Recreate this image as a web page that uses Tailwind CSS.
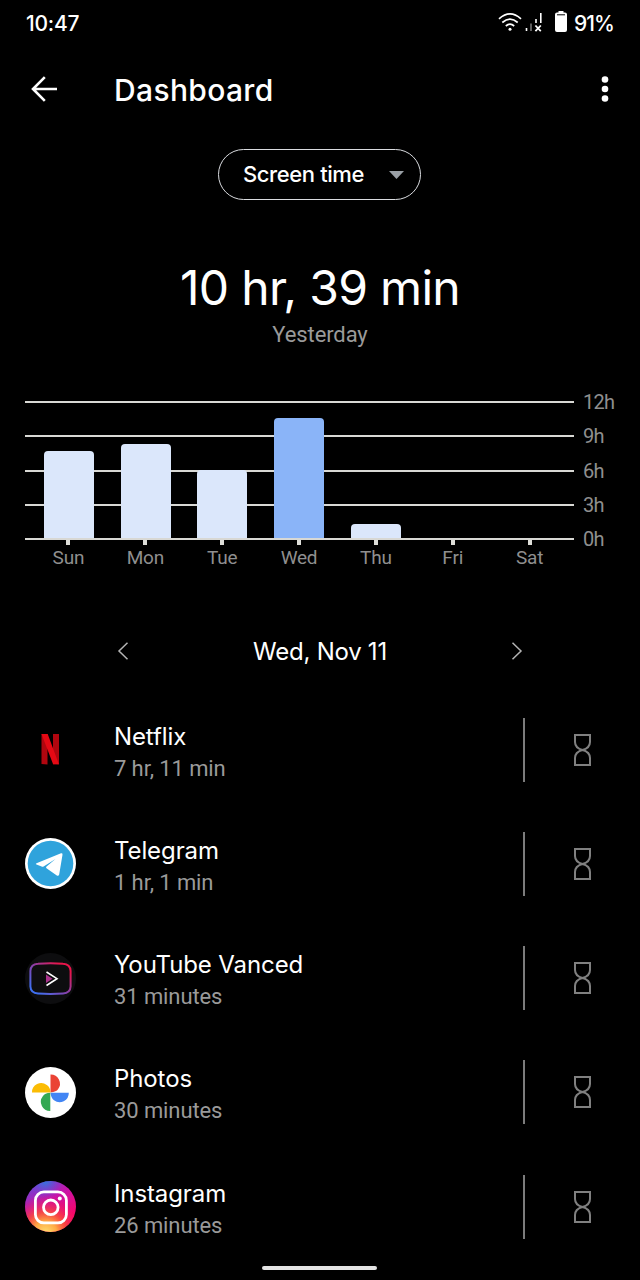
<!doctype html>
<html lang="en">
  <head>
    <meta charset="UTF-8" />
    <title>Dashboard</title>
    <meta name="viewport" content="width=device-width, initial-scale=1.0" />
    <script src="https://cdn.jsdelivr.net/npm/@tailwindcss/browser@4"></script>
  </head>

  <body class="bg-black text-white font-['Inter',sans-serif]">
    <div class="relative w-[640px] h-[1280px] overflow-hidden flex flex-col">
      <!-- Status bar -->
      <div class="h-[46px] shrink-0 flex items-center justify-between pl-[26px] pr-[26px]">
        <span class="pt-px text-[21px] font-medium tracking-[-0.2px]">10:47</span>
        <div class="flex items-center">
          <svg class="w-6 h-5 mr-[3px] -mt-[3px]" viewBox="0 0 24 20" fill="none" stroke="#fff" stroke-width="1.7">
            <path d="M1 6.8Q12-3 23 6.8M4.3 10.5Q12 3.8 19.7 10.5M7.8 14Q12 10.3 16.2 14" />
            <circle cx="12" cy="17.2" r="1.5" fill="#fff" stroke="none" />
          </svg>
          <svg class="w-[18px] h-5 mr-[12px] -mt-[2px]" viewBox="0 0 18 20" fill="none" stroke="#fff">
            <path d="M1.5 16v3" stroke-width="1.6" />
            <path d="M6 11.5V19" stroke="#777" stroke-width="1.6" />
            <path d="M11 7v4M15.8 1v10" stroke-width="1.6" />
            <path d="M10.4 13.5l5.4 5.6M15.8 13.5l-5.4 5.6" stroke-width="1.8" />
          </svg>
          <svg class="w-3 h-[21px] mr-[7px] -mt-[3px]" viewBox="0 0 12 21">
            <path fill="#fff" d="M3.5 0h5v1.500H10a2 2 0 0 1 2 2v15.500a2 2 0 0 1-2 2H2a2 2 0 0 1-2-2V3.500a2 2 0 0 1 2-2h1.500z" />
            <path d="M2 3.800h8" stroke="#000" stroke-width="1" />
          </svg>
          <span class="pt-px text-[21px] font-medium tracking-[-0.9px]">91%</span>
        </div>
      </div>

      <!-- App bar -->
      <header class="h-[86px] shrink-0 flex items-center pl-[31px] pr-[31px]">
        <svg class="w-[26px] h-[26px]" viewBox="0 0 26 26" fill="none" stroke="#fff" stroke-width="2.6">
          <path d="M26 13H2M13.800 1.200L2 13l11.800 11.800" />
        </svg>
        <h1 class="ml-[57px] mt-[2px] text-[30px] leading-9 font-medium tracking-[0.35px]">Dashboard</h1>
        <svg class="ml-auto w-2 h-[26px]" viewBox="0 0 8 26" fill="#fff">
          <circle cx="4" cy="3.500" r="3.300" />
          <circle cx="4" cy="13" r="3.300" />
          <circle cx="4" cy="22.500" r="3.300" />
        </svg>
      </header>

      <!-- Metric picker -->
      <button
        class="mt-[17px] ml-[218px] w-[203px] h-[51px] shrink-0 rounded-full border-[1.5px] border-[#dadce0] flex items-center justify-between pl-6 pr-[16px]"
      >
        <span class="text-[22px] font-medium tracking-[-0.4px]">Screen time</span>
        <svg class="w-[15px] h-2" viewBox="0 0 15 8"><path fill="#9aa0a6" d="M0 0h15L7.500 8z" /></svg>
      </button>

      <!-- Total -->
      <div class="mt-[58px] h-[60px] text-center text-[48px] leading-[60px] tracking-[-0.7px]">10 hr, 39 min</div>
      <div class="mt-px h-8 text-center font-['Roboto',sans-serif] text-[22px] leading-8 tracking-[-0.1px] text-[#9a9a9a]">Yesterday</div>

      <!-- Weekly chart -->
      <div class="mt-[50px] ml-[25px] flex font-['Roboto',sans-serif] text-[#8f8f8f]">
        <div class="w-[549px]">
          <div class="grid h-[139px]">
            <div class="col-start-1 row-start-1 flex flex-col justify-between">
              <div class="h-[2px] bg-[#d8d8d4]"></div>
              <div class="h-[2px] bg-[#d8d8d4]"></div>
              <div class="h-[2px] bg-[#d8d8d4]"></div>
              <div class="h-[2px] bg-[#d8d8d4]"></div>
              <div class="h-[2px] bg-[#d8d8d4]"></div>
            </div>
            <div id="bars" class="col-start-1 row-start-1 flex items-end pl-[5.5px] pr-[6px] pb-[2px]"></div>
          </div>
          <div id="days" class="flex pl-[5px] pr-[6px]"></div>
        </div>
        <div class="ml-[9px] -mt-[11px] h-[161px] flex flex-col justify-between text-[20px] leading-6 tracking-[-0.7px]">
          <span>12h</span>
          <span>9h</span>
          <span>6h</span>
          <span>3h</span>
          <span>0h</span>
        </div>
      </div>

      <!-- Day switcher -->
      <div class="mt-[61px] h-10 shrink-0 flex items-center justify-between px-[117px]">
        <svg class="w-3 h-[18px]" viewBox="0 0 12 18" fill="none" stroke="#b4b4b4" stroke-width="1.500">
          <path d="M10.500 .8L2 9l8.500 8.200" />
        </svg>
        <span class="mt-[2px] text-[24px] tracking-[-0.25px]">Wed, Nov 11</span>
        <svg class="w-3 h-[18px]" viewBox="0 0 12 18" fill="none" stroke="#b4b4b4" stroke-width="1.500">
          <path d="M1.500 .8L10 9l-8.500 8.200" />
        </svg>
      </div>

      <!-- App list -->
      <ul id="apps" class="mt-[21.500px]"></ul>

      <!-- Gesture handle -->
      <div class="absolute left-[262px] bottom-[10px] w-[115px] h-[4px] rounded-full bg-[#e4e4e4]"></div>
    </div>

    <script>
      const days = [
        { name: "Sun", height: 87 },
        { name: "Mon", height: 94 },
        { name: "Tue", height: 68 },
        { name: "Wed", height: 120, selected: true },
        { name: "Thu", height: 14 },
        { name: "Fri", height: 0 },
        { name: "Sat", height: 0 },
      ];

      const apps = [
        {
          name: "Netflix",
          time: "7 hr, 11 min",
          icon: `<path fill="#b1060f" d="M16.500 10h6v30.500l-6-.5zM28 10h6v30l-6 .5z"/>
            <path fill="#e50914" d="M16.500 10h6.200L34 40.500q-3-.6-6-.6z"/>`,
        },
        {
          name: "Telegram",
          time: "1 hr, 1 min",
          icon: `<circle cx="25.500" cy="25.500" r="25.500" fill="#fff"/>
            <circle cx="25.500" cy="25.500" r="22.800" fill="#2fa3dc"/>
            <path fill="#fff" d="M11.500 25.200L36 15.300q1.700-.4 1.500 1.400L34.200 36.500q-.6 2-2.400 1l-10.300-7.200q-1-.8 0-1.800L30.500 21 18.600 28.400q-1 .5-2 .1l-5.100-1.900q-1.500-.7 0-1.400z"/>`,
        },
        {
          name: "YouTube Vanced",
          time: "31 minutes",
          icon: `<defs><linearGradient id="vanced" x1="0" y1="1" x2="1" y2="0">
              <stop offset=".1" stop-color="#3f6ff0"/><stop offset=".5" stop-color="#8a3fa8"/><stop offset=".85" stop-color="#e8154b"/>
            </linearGradient></defs>
            <circle cx="25.500" cy="25.500" r="25.500" fill="#0d0d0f"/>
            <path fill="none" stroke="url(#vanced)" stroke-width="2" d="M13 10.700Q25.500 9.800 38 10.700 45.300 11 45.600 18V33.500Q45.300 40 38 40.600 25.500 41.400 13 40.600 5.700 40 5.400 33.500V18Q5.700 11 13 10.700z"/>
            <path fill="#a8328c" d="M21 21.500l6.500 4.200L21 30z"/>
            <path fill="none" stroke="#fff" stroke-width="1.600" d="M21.500 19l10.500 6.700-10.500 6.800"/>`,
        },
        {
          name: "Photos",
          time: "30 minutes",
          icon: `<circle cx="25.500" cy="25.500" r="25.500" fill="#fff"/>
            <path fill="#ea4335" d="M25.500 7.500a9.200 9.200 0 0 1 7.500 14.800q-1.500 2.500-7.500 3.200z"/>
            <path fill="#4285f4" d="M43.800 25.800a9.200 9.200 0 0 1-14.800 7.500q-3-2-3.500-7.500z"/>
            <path fill="#34a853" d="M25.300 44a9.200 9.200 0 0 1-7.500-14.800q2-3.200 7.500-3.400z"/>
            <path fill="#fbbc04" d="M7 25.500a9.200 9.200 0 0 1 14.800-7.500q3.500 2 3.700 7.500z"/>`,
        },
        {
          name: "Instagram",
          time: "26 minutes",
          icon: `<defs>
              <linearGradient id="ig" x1=".2" y1="0" x2=".8" y2="1">
                <stop offset="0" stop-color="#6a45d8"/><stop offset=".4" stop-color="#c814a8"/><stop offset=".8" stop-color="#f5056a"/>
              </linearGradient>
              <radialGradient id="igsun" cx=".4" cy="1.020" r=".75">
                <stop offset="0" stop-color="#ffe070"/><stop offset=".3" stop-color="#ffab45"/><stop offset=".55" stop-color="#fb5534" stop-opacity=".8"/><stop offset="1" stop-color="#f5056a" stop-opacity="0"/>
              </radialGradient>
              <radialGradient id="igsky" cx=".4" cy="0" r=".35">
                <stop offset="0" stop-color="#2f78e0"/><stop offset="1" stop-color="#6a45d8" stop-opacity="0"/>
              </radialGradient>
            </defs>
            <circle cx="25.500" cy="25.500" r="25.500" fill="url(#ig)"/>
            <circle cx="25.500" cy="25.500" r="25.500" fill="url(#igsun)"/>
            <circle cx="25.500" cy="25.500" r="25.500" fill="url(#igsky)"/>
            <g fill="none" stroke="#fff" stroke-width="2.800">
              <rect x="10.400" y="10.900" width="31" height="31" rx="8.500"/>
              <circle cx="25.800" cy="26.300" r="7.300"/>
            </g>
            <circle cx="34.800" cy="17.500" r="2" fill="#fff"/>`,
        },
      ];

      document.getElementById("bars").innerHTML = days
        .map(
          (day) => `<div class="flex-1 flex justify-center">
            <div class="w-[50px] rounded-t-[4px] ${day.selected ? "bg-[#8ab4f8]" : "bg-[#dbe7fb]"}" style="height: ${day.height}px"></div>
          </div>`
        )
        .join("");

      document.getElementById("days").innerHTML = days
        .map(
          (day) => `<div class="flex-1 flex flex-col items-center">
            <div class="w-1 h-[5px] bg-[#deded9]"></div>
            <span class="mt-px text-[19px] leading-6 tracking-[-0.2px]">${day.name}</span>
          </div>`
        )
        .join("");

      document.getElementById("apps").innerHTML = apps
        .map(
          (app) => `<li class="h-[114.25px] flex items-center pl-[25px] pr-[49px]">
            <svg class="w-[51px] h-[51px] shrink-0" viewBox="0 0 51 51">${app.icon}</svg>
            <div class="ml-[38px] pt-[6px] w-[409px]">
              <div class="text-[24px] leading-8 tracking-[-0.1px]">${app.name}</div>
              <div class="font-['Roboto',sans-serif] text-[22px] leading-8 tracking-[-0.1px] text-[#9a9a9a]">${app.time}</div>
            </div>
            <div class="w-[2px] h-16 bg-[#7c7c7c]"></div>
            <svg class="ml-auto w-[17px] h-8" viewBox="0 0 17 32" fill="none" stroke="#808080" stroke-width="2">
              <path d="M1 1h15v7q0 6-7.500 8 7.500 2 7.500 8v7H1v-7q0-6 7.500-8Q1 14 1 8z" />
            </svg>
          </li>`
        )
        .join("");
    </script>
  </body>
</html>
